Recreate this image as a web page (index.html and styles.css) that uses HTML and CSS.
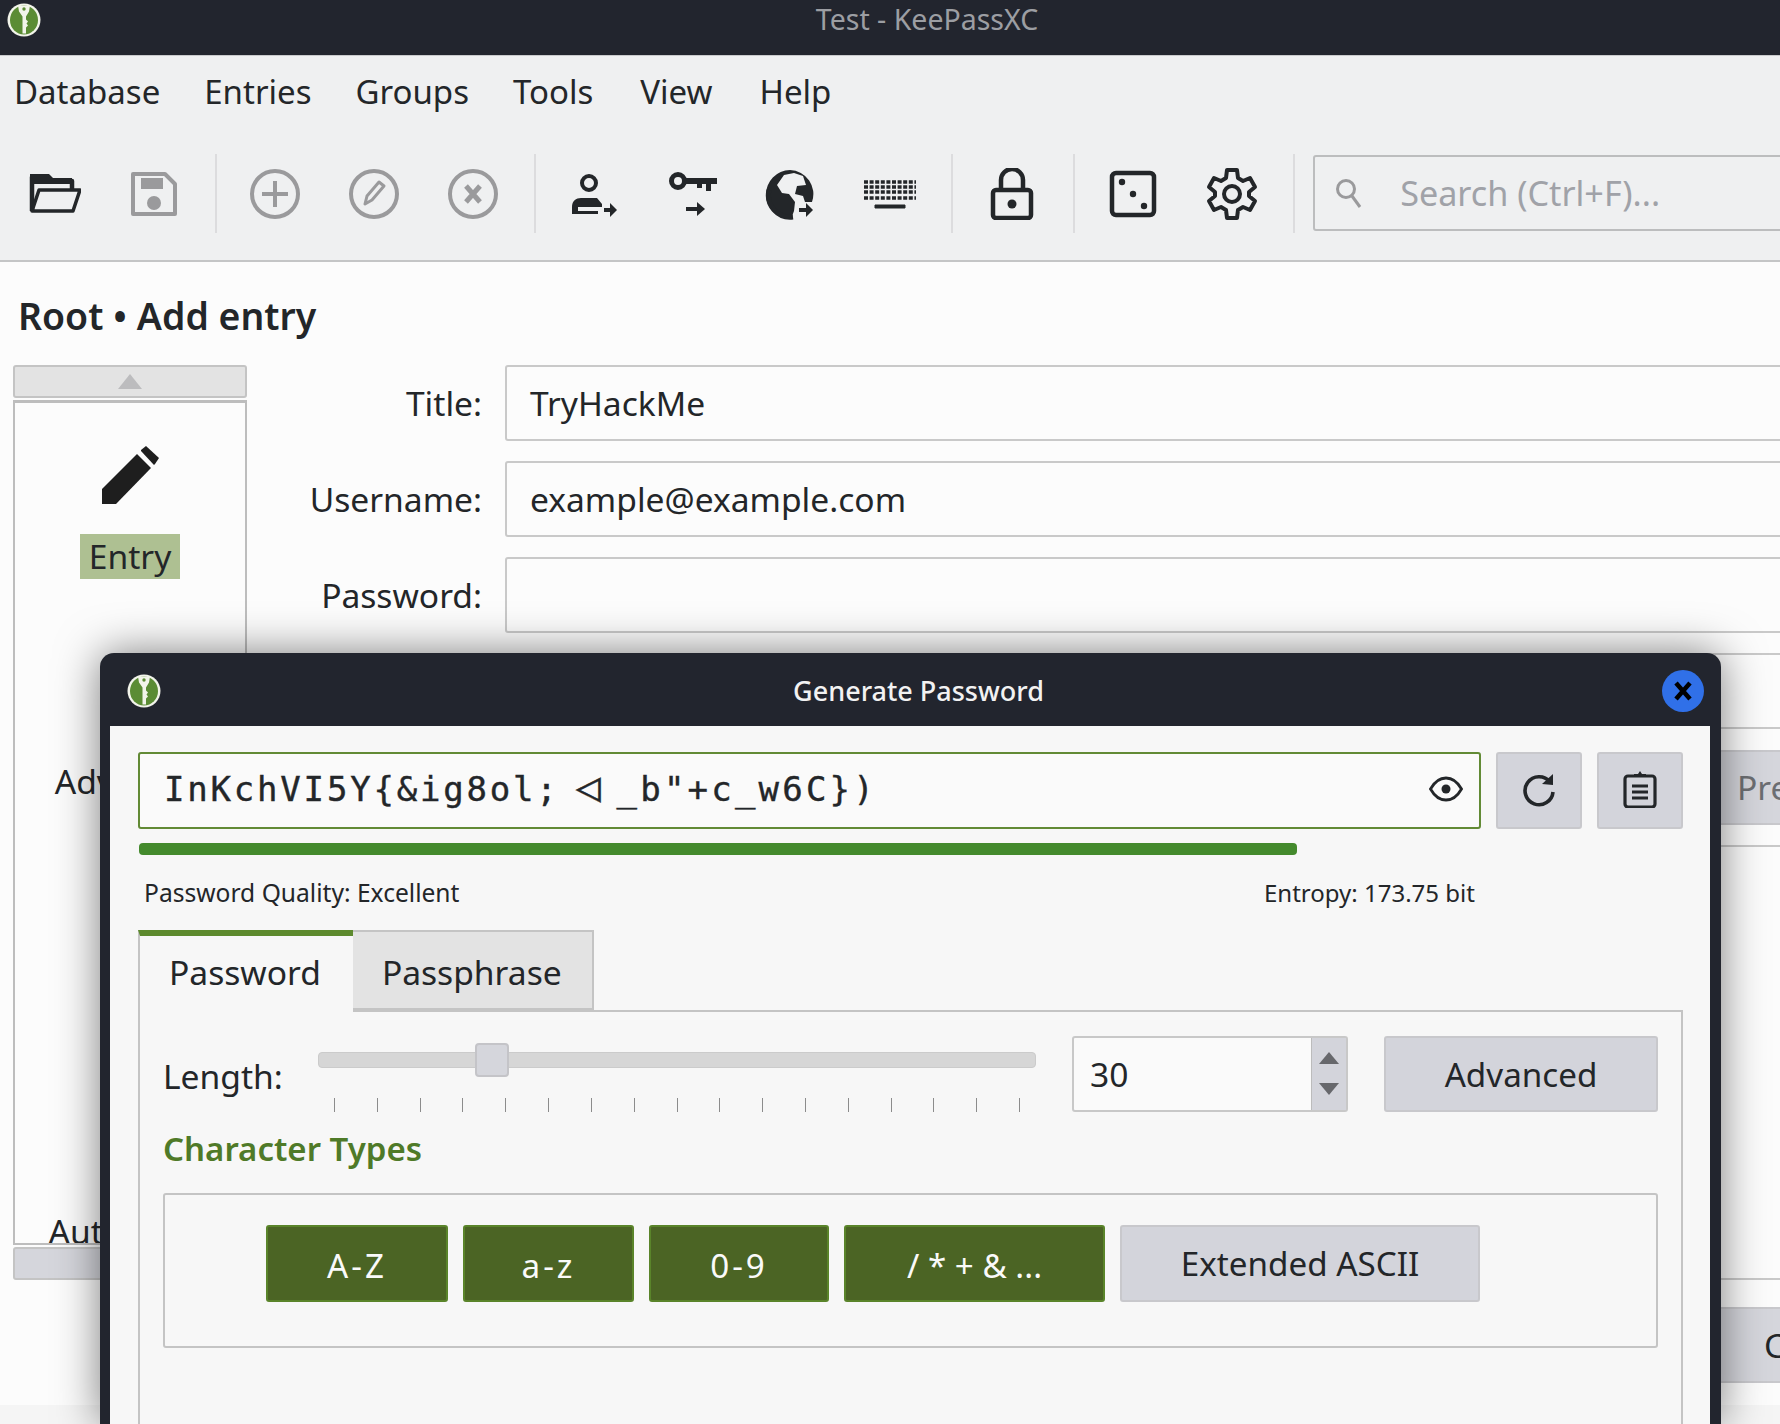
FILE: index.html
```html
<!DOCTYPE html>
<html lang="en">
<head>
    <meta charset="UTF-8">
    <meta name="viewport" content="width=device-width, initial-scale=1.0">
    <title>Test - KeePassXC</title>
    <link rel="stylesheet" href="styles.css">
</head>
<body>
    <svg class="defs" width="0" height="0">
        <symbol id="logo" viewBox="0 0 34 34">
            <ellipse cx="17" cy="17" rx="16.5" ry="16.5" fill="#f2f4ea"/>
            <ellipse cx="17" cy="17" rx="14" ry="14.5" fill="#5b8c34"/>
            <path d="M11 2.500h12l-1 6-3 5v3l2 2-1.500 2 1.500 2-2 2v6h-3.500V13.500l-3.500-5z" fill="#f2f4ea"/>
            <circle cx="17" cy="6" r="1.700" fill="#5b8c34"/>
        </symbol>
    </svg>

    <header class="titlebar">
        <svg class="logo logo-main"><use href="#logo"/></svg>
        <span class="titlebar-text">Test - KeePassXC</span>
    </header>

    <nav class="menubar">
        <span>Database</span>
        <span>Entries</span>
        <span>Groups</span>
        <span>Tools</span>
        <span>View</span>
        <span>Help</span>
    </nav>

    <div class="toolbar">
        <button class="tool">
            <svg viewBox="0 0 52 52"><path d="M3 43V9h16l4 4h20v8" fill="none" stroke="#232629" stroke-width="4.500" stroke-linejoin="round"/><path d="M3 43l7-21h41l-7 21z" fill="none" stroke="#232629" stroke-width="3.500" stroke-linejoin="round"/><path d="M1 6h19l4 4h19v6H1z" fill="#232629"/></svg>
        </button>
        <button class="tool">
            <svg viewBox="0 0 52 52"><path d="M5 6h32l10 10v30H5z" fill="none" stroke="#9a9a9c" stroke-width="4" stroke-linejoin="round"/><rect x="13" y="10" width="22" height="11" fill="#9a9a9c"/><circle cx="26" cy="35" r="7" fill="#9a9a9c"/></svg>
        </button>
        <i class="sep"></i>
        <button class="tool">
            <svg viewBox="0 0 52 52"><circle cx="26" cy="26" r="23" fill="none" stroke="#9a9a9c" stroke-width="4"/><path d="M26 13v26M13 26h26" stroke="#9a9a9c" stroke-width="4"/></svg>
        </button>
        <button class="tool">
            <svg viewBox="0 0 52 52"><circle cx="26" cy="26" r="23" fill="none" stroke="#9a9a9c" stroke-width="4"/><path d="M17 36l2-8 12-14 5 4-12 14z" fill="none" stroke="#9a9a9c" stroke-width="3" stroke-linejoin="round"/></svg>
        </button>
        <button class="tool">
            <svg viewBox="0 0 52 52"><circle cx="26" cy="26" r="23" fill="none" stroke="#9a9a9c" stroke-width="4"/><path d="M19 18l14 16M33 18L19 34" stroke="#9a9a9c" stroke-width="5"/></svg>
        </button>
        <i class="sep"></i>
        <button class="tool">
            <svg viewBox="0 0 52 52"><circle cx="21" cy="15" r="7" fill="none" stroke="#232629" stroke-width="4"/><path d="M4 46V39c0-6 4-9 9-9h16l5 6v3H10v4h20v3z" fill="#232629"/><path d="M36 42h8" stroke="#232629" stroke-width="4"/><path d="M42 35l7 7-7 7z" fill="#232629"/></svg>
        </button>
        <button class="tool">
            <svg viewBox="0 0 52 52"><circle cx="11" cy="13" r="6.500" fill="none" stroke="#232629" stroke-width="5"/><path d="M18 10h32v6h-6v7h-5v-7h-4v4h-5v-4H18z" fill="#232629"/><path d="M19 41h14" stroke="#232629" stroke-width="4"/><path d="M30 34l8 7-8 7z" fill="#232629"/></svg>
        </button>
        <button class="tool">
            <svg viewBox="0 0 52 52"><path d="M25 2a24 24 0 0 1 22 32h-7l-2-6-8-2 2-8 9-1-3-9-9-3-10 2-7 10 5 8 7 1 6 8-1 9-3 8A24 24 0 0 1 25 2z" fill="#232629"/><path d="M4 22a22 22 0 0 0 24 27" fill="none" stroke="#232629" stroke-width="5"/><path d="M34 42h8" stroke="#232629" stroke-width="4"/><path d="M41 35l7 7-7 7z" fill="#232629"/></svg>
        </button>
        <button class="tool">
            <svg viewBox="0 0 52 52"><path d="M0 14h52M0 19h52M0 24h52M0 30h52" stroke="#232629" stroke-width="3.500" stroke-dasharray="4 1.600" fill="none"/><path d="M11 37h30v3H11z" fill="#232629" stroke="#232629"/></svg>
        </button>
        <i class="sep"></i>
        <button class="tool">
            <svg viewBox="0 0 52 52"><rect x="7" y="22" width="38" height="28" rx="3" fill="none" stroke="#232629" stroke-width="4.500"/><path d="M15 22V12a11 11 0 0 1 22 0v10" fill="none" stroke="#232629" stroke-width="4.500"/><circle cx="26" cy="36" r="4.500" fill="#232629"/></svg>
        </button>
        <i class="sep"></i>
        <button class="tool">
            <svg viewBox="0 0 52 52"><rect x="5" y="5" width="42" height="42" rx="4" fill="none" stroke="#232629" stroke-width="4.500"/><circle cx="15" cy="14" r="3.200" fill="#232629"/><circle cx="26" cy="26" r="3.200" fill="#232629"/><circle cx="37" cy="38" r="3.200" fill="#232629"/></svg>
        </button>
        <button class="tool">
            <svg viewBox="0 0 52 52"><path d="M21 2h10l1 8 5 3 7-3 5 9-6 5v4l6 5-5 9-7-3-5 3-1 8H21l-1-8-5-3-7 3-5-9 6-5v-4l-6-5 5-9 7 3 5-3z" fill="none" stroke="#232629" stroke-width="4" stroke-linejoin="round"/><circle cx="26" cy="26" r="8" fill="none" stroke="#232629" stroke-width="4"/></svg>
        </button>
        <i class="sep sep-last"></i>
        <div class="search">
            <svg class="search-icon" viewBox="0 0 28 30"><circle cx="11" cy="11" r="8.500" fill="none" stroke="#9a9a9c" stroke-width="3"/><path d="M17 18l8 11" stroke="#9a9a9c" stroke-width="3"/></svg>
            <span class="search-text">Search (Ctrl+F)...</span>
        </div>
    </div>

    <main class="content">
        <h1 class="crumb">Root • Add entry</h1>
        <div class="editor">
            <div class="sidebar">
                <div class="scroll-btn">
                    <i class="arrow-up"></i>
                </div>
                <ul class="categories">
                    <li class="category">
                        <svg class="category-icon" viewBox="0 0 58 58"><path d="M1 58V43L36 8l14 14-35 36z" fill="#1e1e1e"/><path d="M40 4l5-4 13 12-4 6-1 1-13-14z" fill="#1e1e1e"/></svg>
                        <span class="category-label selected">Entry</span>
                    </li>
                    <li class="category category-advanced"><span class="category-label">Advanced</span></li>
                    <li class="category category-autotype"><span class="category-label">Auto-Type</span></li>
                </ul>
                <div class="scroll-btn scroll-btn-down"></div>
            </div>
            <div class="form">
                <div class="form-row">
                    <label>Title:</label>
                    <div class="field">TryHackMe</div>
                </div>
                <div class="form-row">
                    <label>Username:</label>
                    <div class="field">example@example.com</div>
                </div>
                <div class="form-row">
                    <label>Password:</label>
                    <div class="field"></div>
                </div>
                <div class="form-row">
                    <label>URL:</label>
                    <div class="field"></div>
                </div>
                <div class="form-row">
                    <label>Tags:</label>
                    <div class="field"></div>
                    <div class="form-btn">Presets</div>
                </div>
                <div class="form-row form-row-notes">
                    <label>Notes:</label>
                    <div class="field"></div>
                </div>
            </div>
        </div>
        <div class="actions">
            <div class="form-btn">Cancel</div>
        </div>
        <div class="statusbar"></div>
    </main>

    <section class="dialog">
        <header class="dialog-title">
            <svg class="logo"><use href="#logo"/></svg>
            <span class="dialog-title-text">Generate Password</span>
            <span class="dialog-close">
                <svg viewBox="0 0 42 42"><path d="M14 13l14 16M28 13L14 29" stroke="#000" stroke-width="4.500"/></svg>
            </span>
        </header>
        <div class="dialog-body">
            <div class="pw-row">
                <div class="pw-field">
                    <span class="pw-text">InKchVI5Y{&amp;ig8ol;<span class="pw-sym">◁</span><span class="pw-tail">_b"+c_w6C})</span></span>
                    <svg class="eye" viewBox="0 0 34 26"><path d="M1.500 13C6 5 11 2 17 2s11 3 15.500 11C28 21 23 24 17 24S6 21 1.500 13z" fill="none" stroke="#232629" stroke-width="2.800"/><circle cx="17" cy="13" r="4.500" fill="#232629"/></svg>
                </div>
                <button class="icon-btn">
                    <svg viewBox="0 0 34 34"><path d="M28 10A14 14 0 1 0 31 20" fill="none" stroke="#232629" stroke-width="3.600"/><path d="M20 12L31 2v11z" fill="#232629"/></svg>
                </button>
                <button class="icon-btn">
                    <svg viewBox="0 0 34 38"><rect x="2" y="6" width="30" height="31" rx="3" fill="none" stroke="#232629" stroke-width="3.200"/><path d="M11 7V4h4l2-3 2 3h4v3z" fill="#232629"/><path d="M9 16h16M9 22h16M9 28h16" stroke="#232629" stroke-width="3"/></svg>
                </button>
            </div>
            <div class="quality-bar"></div>
            <div class="quality-info">
                <span class="quality-text">Password Quality: Excellent</span>
                <span class="entropy">Entropy: 173.75 bit</span>
            </div>
            <div class="tabs">
                <div class="tab tab-active">Password</div>
                <div class="tab">Passphrase</div>
            </div>
            <div class="tab-pane">
                <div class="length-row">
                    <span class="length-label">Length:</span>
                    <div class="slider">
                        <div class="slider-track"><i class="slider-handle"></i></div>
                        <div class="slider-ticks">
                            <i></i><i></i><i></i><i></i><i></i><i></i><i></i><i></i><i></i>
                            <i></i><i></i><i></i><i></i><i></i><i></i><i></i><i></i>
                        </div>
                    </div>
                    <div class="spin">
                        <span class="spin-value">30</span>
                        <div class="spin-arrows">
                            <i class="spin-up"></i>
                            <i class="spin-down"></i>
                        </div>
                    </div>
                    <button class="btn btn-advanced">Advanced</button>
                </div>
                <h2 class="section-title">Character Types</h2>
                <div class="char-group">
                    <button class="btn btn-on">A-Z</button>
                    <button class="btn btn-on">a-z</button>
                    <button class="btn btn-on">0-9</button>
                    <button class="btn btn-on btn-sym">/ * + &amp; ...</button>
                    <button class="btn">Extended ASCII</button>
                </div>
            </div>
        </div>
    </section>
</body>
</html>
```

FILE: styles.css
```css
* {
    box-sizing: border-box;
}
html, body {
    height: 1424px;
}
body {
    margin: 0;
    overflow: hidden;
    font-family: "Noto Sans", sans-serif;
    font-size: 33.6px;
    color: #232629;
    background-color: #fcfcfc;
    display: flex;
    flex-direction: column;
    position: relative;
}
.defs {
    position: absolute;
}
button {
    font: inherit;
    color: inherit;
}

/* main window chrome */
.titlebar {
    flex: none;
    height: 56px;
    background-color: #22252e;
    border-bottom: 1px solid #c9cacc;
    display: flex;
    align-items: center;
    justify-content: center;
    position: relative;
}
.titlebar-text {
    font-size: 28.500px;
    color: #9c9ea3;
    margin-left: 74px;
    margin-top: -17px;
}
.logo {
    width: 34px;
    height: 34px;
    flex: none;
}
.logo-main {
    position: absolute;
    left: 7px;
    top: 3px;
}
.menubar {
    flex: none;
    height: 75px;
    font-size: 33px;
    background-color: #eff0f1;
    display: flex;
    align-items: center;
    gap: 44px;
    padding: 0 0 5px 14px;
}
.menubar span:nth-child(n+5) {
    margin-left: 3px;
}
.toolbar {
    flex: none;
    height: 131px;
    background-color: #eff0f1;
    border-bottom: 2px solid #c4c5c6;
    display: flex;
    align-items: center;
    padding: 0 0 4px 6px;
}
.tool {
    width: 98.600px;
    height: 60px;
    padding: 0;
    border: 0;
    background: none;
    display: flex;
    align-items: center;
    justify-content: center;
    flex: none;
}
.tool svg {
    width: 52px;
    height: 52px;
}
.sep {
    flex: none;
    width: 2px;
    height: 79px;
    margin: 0 9px 0 12px;
    background-color: #dcdcde;
}
.sep-last {
    margin-right: 18px;
}
.search {
    flex: none;
    width: 600px;
    height: 76px;
    margin-top: -2px;
    border: 2px solid #bcbdbe;
    border-radius: 3px;
    display: flex;
    align-items: center;
    padding-left: 20px;
}
.search-icon {
    width: 28px;
    height: 30px;
    margin-right: 37px;
}
.search-text {
    font-size: 34.200px;
    color: #a0a2a8;
}

/* editor behind the dialog */
.content {
    flex: 1;
    min-height: 0;
    display: flex;
    flex-direction: column;
}
.crumb {
    margin: 0;
    padding: 30px 0 25px 18px;
    font-size: 37.400px;
    font-weight: 600;
    line-height: 48px;
    color: #232629;
}
.editor {
    flex: 1;
    display: flex;
    min-height: 0;
}
.sidebar {
    flex: none;
    width: 234px;
    margin-left: 13px;
    display: flex;
    flex-direction: column;
    gap: 2px;
}
.scroll-btn {
    flex: none;
    height: 33px;
    background-color: #e3e3e3;
    border: 2px solid #c4c4c4;
    border-radius: 3px;
    display: flex;
    align-items: center;
    justify-content: center;
}
.scroll-btn-down {
    background-color: #d5d6dc;
}
.arrow-up {
    width: 0;
    height: 0;
    border-left: 12px solid transparent;
    border-right: 12px solid transparent;
    border-bottom: 15px solid #bcbcbe;
}
.categories {
    flex: 1;
    margin: 0;
    padding: 43px 0 0;
    list-style: none;
    background-color: #fcfcfc;
    border: 2px solid #bdbdbd;
    border-top-width: 3px;
    display: flex;
    flex-direction: column;
    overflow: hidden;
}
.category {
    display: flex;
    flex-direction: column;
    align-items: center;
    gap: 30px;
}
.category-advanced {
    margin-top: 180px;
    padding-left: 4px;
}
.category-autotype {
    margin-top: 405px;
    padding-right: 4px;
}
.category-icon {
    width: 58px;
    height: 58px;
}
.category-label {
    padding: 0 9px;
    line-height: 45px;
    white-space: nowrap;
}
.selected {
    background-color: #aec092;
}
.form {
    flex: 1;
    margin: 0 -30px 0 0;
    padding-left: 21px;
    display: flex;
    flex-direction: column;
    gap: 20px;
}
.form-row {
    flex: none;
    height: 76px;
    display: flex;
    align-items: center;
    gap: 12px;
}
.form-row label {
    flex: none;
    width: 214px;
    margin-right: 11px;
    text-align: right;
}
.form-row-notes {
    flex: 1;
    min-height: 0;
    align-items: flex-start;
}
.form-row-notes .field {
    height: 100%;
}
.field {
    flex: 1;
    height: 100%;
    min-width: 0;
    background-color: #fcfcfc;
    border: 2px solid #c9c9c9;
    border-radius: 3px;
    padding-left: 23px;
    display: flex;
    align-items: center;
}
.form-btn {
    flex: none;
    width: 110px;
    height: 75px;
    padding-left: 35px;
    color: #6c6e72;
    background-color: #d5d6dc;
    border: 2px solid #c8c8cc;
    border-radius: 3px;
    display: flex;
    align-items: center;
    white-space: nowrap;
}
.actions {
    flex: none;
    height: 125px;
    padding-top: 27px;
    display: flex;
    justify-content: flex-end;
    margin-right: -60px;
}
.actions .form-btn {
    height: 76px;
    color: #232629;
    width: 160px;
    padding-left: 82px;
}
.statusbar {
    flex: none;
    height: 19px;
    background-color: #f5f5f5;
}

/* generate password window */
.dialog {
    position: absolute;
    left: 100px;
    top: 653px;
    width: 1621px;
    height: 771px;
    background-color: #22252e;
    border-radius: 14px 14px 0 0;
    box-shadow: 0 0 44px rgba(0, 0, 0, 0.5);
    padding: 0 11px 0 10px;
    display: flex;
    flex-direction: column;
}
.dialog-title {
    flex: none;
    height: 73px;
    padding: 2px 5px 0 17px;
    display: flex;
    align-items: center;
    justify-content: space-between;
}
.dialog-title-text {
    font-size: 27px;
    font-weight: 500;
    color: #f2f2f2;
    margin-left: 14px;
}
.dialog-close {
    width: 42px;
    height: 42px;
    border-radius: 50%;
    background-color: #3070e8;
    margin-right: 1px;
}
.dialog-close svg {
    width: 42px;
    height: 42px;
    display: block;
}
.dialog-body {
    flex: 1;
    min-height: 0;
    background-color: #f7f7f7;
    padding: 26px 27px 0 28px;
    display: flex;
    flex-direction: column;
}
.pw-row {
    flex: none;
    height: 77px;
    display: flex;
    gap: 15px;
}
.pw-field {
    flex: 1;
    background-color: #fafafa;
    border: 2px solid #628a35;
    border-radius: 3px;
    padding: 0 16px 4px 24px;
    display: flex;
    align-items: center;
    justify-content: space-between;
}
.pw-text {
    font-family: "DejaVu Sans Mono", monospace;
    font-size: 34px;
    letter-spacing: 2.800px;
    white-space: pre;
    -webkit-text-stroke: 0.4px #232629;
}
.pw-sym {
    display: inline-block;
    width: 57px;
    font-size: 42px;
    line-height: 0;
    letter-spacing: 0;
    text-align: center;
}
.pw-tail {
    letter-spacing: 3.200px;
}
.eye {
    width: 34px;
    height: 26px;
}
.icon-btn {
    flex: none;
    width: 86px;
    padding: 0 0 4px;
    background-color: #d3d4db;
    border: 2px solid #c8c8cc;
    border-radius: 3px;
    display: flex;
    align-items: center;
    justify-content: center;
}
.icon-btn svg {
    width: 34px;
    height: 38px;
}
.quality-bar {
    flex: none;
    width: 1158px;
    height: 12px;
    margin: 14px 0 0 1px;
    border-radius: 4px;
    background-color: #448a2d;
}
.quality-info {
    flex: none;
    height: 38px;
    margin-top: 19px;
    padding-left: 6px;
    font-size: 24px;
    line-height: 38px;
    display: flex;
}
.quality-text {
    font-size: 24.600px;
}
.entropy {
    position: absolute;
    left: 1164px;
}
.tabs {
    flex: none;
    height: 80px;
    margin-top: 18px;
    display: flex;
    align-items: flex-end;
    position: relative;
    z-index: 1;
}
.tab {
    height: 80px;
    padding: 4px 30px 0 29px;
    background-color: #e3e3e3;
    border: 2px solid #c4c4c4;
    border-left: 0;
    display: flex;
    align-items: center;
}
.tab-active {
    height: 82px;
    margin-bottom: -2px;
    background-color: #f7f7f7;
    border: 2px solid #c4c4c4;
    border-top: 6px solid #5d8a2e;
    border-bottom: 0;
    border-right: 0;
    padding: 0 32px 4px 29px;
}
.tab-pane {
    flex: 1;
    min-height: 0;
    border: 2px solid #c4c4c4;
    border-bottom: 0;
    padding: 24px 23px 0 23px;
}
.length-row {
    height: 76px;
    display: flex;
    align-items: center;
}
.length-label {
    flex: none;
    width: 155px;
    padding-top: 4px;
}
.slider {
    flex: none;
    width: 718px;
    height: 76px;
    padding-top: 16px;
}
.slider-track {
    height: 16px;
    background-color: #d6d6d6;
    border: 1px solid #cbcbcb;
    border-radius: 4px;
    position: relative;
}
.slider-handle {
    position: absolute;
    left: 156px;
    top: -10px;
    width: 34px;
    height: 34px;
    background-color: #d5d6dc;
    border: 2px solid #c4c4c8;
    border-radius: 4px;
}
.slider-ticks {
    height: 14px;
    margin-top: 30px;
    padding: 0 16px;
    display: flex;
    justify-content: space-between;
}
.slider-ticks i {
    width: 1px;
    background-color: #8c8c8c;
}
.spin {
    flex: none;
    width: 276px;
    height: 76px;
    margin-left: 36px;
    background-color: #fafafa;
    border: 2px solid #c8c8c8;
    border-radius: 3px;
    display: flex;
    align-items: center;
    justify-content: space-between;
    padding-left: 16px;
}
.spin-arrows {
    width: 35px;
    height: 100%;
    background-color: #d3d4db;
    border-left: 1px solid #bcbcbc;
    display: flex;
    flex-direction: column;
    align-items: center;
    justify-content: space-around;
    padding: 4px 0 6px;
}
.spin-up, .spin-down {
    width: 0;
    height: 0;
    border-left: 10px solid transparent;
    border-right: 10px solid transparent;
}
.spin-up {
    border-bottom: 12px solid #67686c;
}
.spin-down {
    border-top: 12px solid #67686c;
}
.btn {
    height: 77px;
    padding: 0;
    font-size: 33.200px;
    background-color: #d3d4db;
    border: 2px solid #c8c8cc;
    border-radius: 3px;
}
.btn-advanced {
    flex: 1;
    height: 76px;
    margin-left: 36px;
}
.btn-on {
    padding-top: 3px;
    letter-spacing: 3px;
    background-color: #4b6424;
    border-color: #5a842a;
    color: #fafafa;
}
.btn-sym {
    letter-spacing: 0;
}
.section-title {
    margin: 17px 0 24px;
    font-size: 33px;
    line-height: 40px;
    font-weight: 600;
    color: #4f7a28;
}
.char-group {
    height: 155px;
    border: 2px solid #c4c4c4;
    border-radius: 3px;
    padding: 30px 0 0 101px;
    display: grid;
    grid-template-columns: 182px 171px 180px 261px 360px;
    column-gap: 15px;
    align-items: start;
}
```
